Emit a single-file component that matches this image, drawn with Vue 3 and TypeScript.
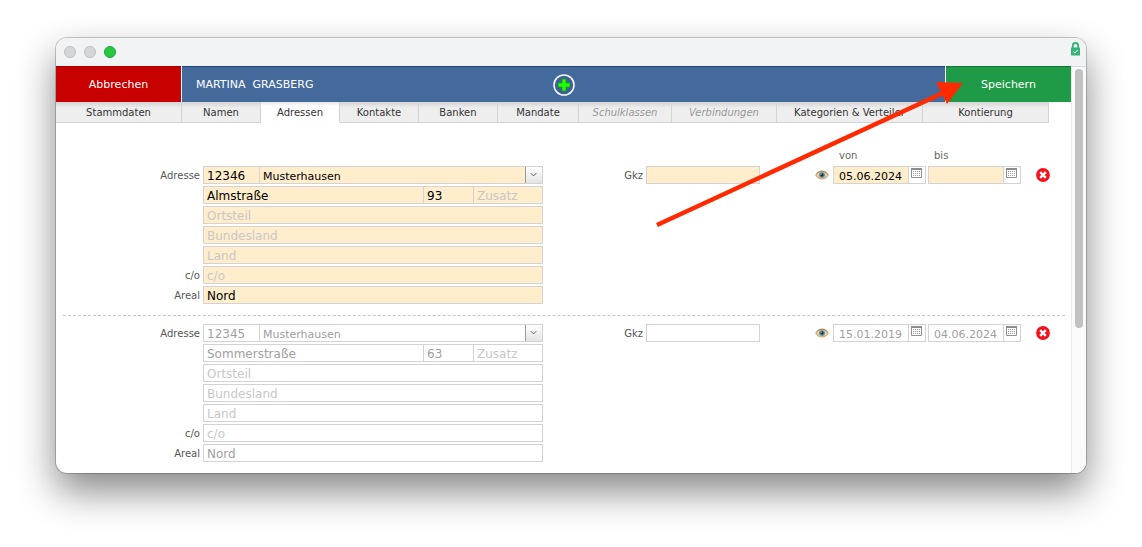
<script setup lang="ts">
import { ref } from 'vue'

interface Tab {
  label: string
  width: number
  muted?: boolean
}

interface Address {
  id: string
  current: boolean
  zip: string
  town: string
  street: string
  number: string
  addition: string
  district: string
  state: string
  country: string
  careOf: string
  area: string
  gkz: string
  from: string
  until: string
}

const tabs: Tab[] = [
  { label: 'Stammdaten', width: 126 },
  { label: 'Namen', width: 79 },
  { label: 'Adressen', width: 79 },
  { label: 'Kontakte', width: 79 },
  { label: 'Banken', width: 79 },
  { label: 'Mandate', width: 81 },
  { label: 'Schulklassen', width: 93, muted: true },
  { label: 'Verbindungen', width: 105, muted: true },
  { label: 'Kategorien & Verteiler', width: 146 },
  { label: 'Kontierung', width: 126 },
]
const activeTab = ref('Adressen')

const addresses = ref<Address[]>([
  {
    id: 'a1', current: true, zip: '12346', town: 'Musterhausen', street: 'Almstraße', number: '93',
    addition: '', district: '', state: '', country: '', careOf: '', area: 'Nord', gkz: '',
    from: '05.06.2024', until: '',
  },
  {
    id: 'a2', current: false, zip: '12345', town: 'Musterhausen', street: 'Sommerstraße', number: '63',
    addition: '', district: '', state: '', country: '', careOf: '', area: 'Nord', gkz: '',
    from: '15.01.2019', until: '04.06.2024',
  },
])

const dateFields = [
  { key: 'from', label: 'von' },
  { key: 'until', label: 'bis' },
] as const
</script>

<template>
  <div class="desktop">
    <main class="window">
      <div class="titlebar">
        <span class="light"></span>
        <span class="light"></span>
        <span class="light green"></span>
        <svg class="lock" width="9" height="14" viewBox="0 0 9 14" aria-hidden="true">
          <path d="M1.800 7V3.700a2.700 2.700 0 0 1 5.400 0V7" fill="none" stroke="#35b278" stroke-width="1.800" />
          <rect y="5.500" width="9" height="8" rx="0.500" fill="#35b278" />
          <path d="M2.300 9.500l1.600 1.600 2.900-3.200" fill="none" stroke="#fff" stroke-width="1" />
        </svg>
      </div>

      <div class="viewport">
        <div class="page">
          <header class="toolbar">
            <button type="button" class="action cancel">Abbrechen</button>
            <div class="person">
              <h1>MARTINA&nbsp; GRASBERG</h1>
              <button type="button" class="add" aria-label="Hinzufügen">
                <svg width="22" height="22" viewBox="0 0 22 22">
                  <circle cx="11" cy="11" r="10" fill="#3f6095" stroke="#f2f5fa" stroke-width="1.600" />
                  <path d="M9 5h4v4h4v4h-4v4H9v-4H5V9h4z" fill="#1fff00" stroke="#169c1d" stroke-width="0.700" />
                </svg>
              </button>
            </div>
            <button type="button" class="action save">Speichern</button>
          </header>

          <nav class="tabs">
            <button
              v-for="tab in tabs"
              :key="tab.label"
              type="button"
              class="tab"
              :class="{ active: tab.label === activeTab, muted: tab.muted }"
              :style="{ flexBasis: tab.width + 'px' }"
              @click="activeTab = tab.label"
            >{{ tab.label }}</button>
          </nav>

          <div class="columns">
            <span v-for="field in dateFields" :key="field.key">{{ field.label }}</span>
          </div>

          <section
            v-for="address in addresses"
            :key="address.id"
            class="address"
            :class="{ current: address.current }"
          >
            <div class="lines">
              <label :for="address.id + '-zip'">Adresse</label>
              <div class="line place">
                <input :id="address.id + '-zip'" v-model="address.zip" type="text" />
                <div class="combo">
                  <select v-model="address.town" aria-label="Ort">
                    <option>Musterhausen</option>
                  </select>
                  <svg width="17" height="16" viewBox="0 0 17 16" aria-hidden="true">
                    <path d="M5 6l3 3 3-3" fill="none" stroke="#555" stroke-width="1" />
                  </svg>
                </div>
              </div>
              <div class="line street">
                <input v-model="address.street" type="text" aria-label="Straße" />
                <input v-model="address.number" type="text" aria-label="Hausnummer" />
                <input v-model="address.addition" type="text" placeholder="Zusatz" aria-label="Zusatz" />
              </div>
              <div class="line">
                <input v-model="address.district" type="text" placeholder="Ortsteil" aria-label="Ortsteil" />
              </div>
              <div class="line">
                <input v-model="address.state" type="text" placeholder="Bundesland" aria-label="Bundesland" />
              </div>
              <div class="line">
                <input v-model="address.country" type="text" placeholder="Land" aria-label="Land" />
              </div>
              <label :for="address.id + '-co'">c/o</label>
              <div class="line">
                <input :id="address.id + '-co'" v-model="address.careOf" type="text" placeholder="c/o" />
              </div>
              <label :for="address.id + '-area'">Areal</label>
              <div class="line">
                <input :id="address.id + '-area'" v-model="address.area" type="text" />
              </div>
            </div>

            <div class="gkz">
              <label :for="address.id + '-gkz'">Gkz</label>
              <div class="line">
                <input :id="address.id + '-gkz'" v-model="address.gkz" type="text" />
              </div>
            </div>

            <div class="validity">
              <button type="button" class="icon eye" aria-label="Anzeigen">
                <svg width="14" height="10" viewBox="0 0 14 10">
                  <path d="M0.800 5C2.500 2.300 4.500 1 7 1s4.500 1.300 6.200 4C11.500 7.700 9.500 9 7 9S2.500 7.700 0.800 5z" fill="#ddd5c4" stroke="#d9a25a" stroke-width="1.200" />
                  <path d="M1.500 3.800C3.300 1.900 5 1.400 7 1.400s3.700 0.500 5.500 2.400" fill="none" stroke="#9c8250" stroke-width="0.800" />
                  <circle cx="7" cy="4.900" r="3" fill="#6c93a3" />
                  <circle cx="7" cy="4.900" r="1.600" fill="#1d2a33" />
                  <circle cx="6.200" cy="4" r="0.600" fill="#fff" />
                </svg>
              </button>
              <div v-for="field in dateFields" :key="field.key" class="line date">
                <input v-model="address[field.key]" type="text" :aria-label="field.label" />
                <button type="button" class="icon" aria-label="Kalender">
                  <svg width="11" height="11" viewBox="0 0 11 11">
                    <path d="M0.500 0.500h10v9h-10z" fill="#fff" stroke="#909090" />
                    <path d="M0 1h11" stroke="#8c8c8c" stroke-width="2" />
                    <path d="M2 3.500h7M2 5.500h7M2 7.500h7" stroke="#999" stroke-dasharray="1 1" />
                  </svg>
                </button>
              </div>
              <button type="button" class="icon remove" aria-label="Löschen">
                <svg width="14" height="14" viewBox="0 0 14 14">
                  <circle cx="7" cy="7" r="6.900" fill="#f5101a" />
                  <path d="M4.200 4.200l5.600 5.600M9.800 4.200L4.200 9.800" stroke="#fff" stroke-width="2.400" />
                </svg>
              </button>
            </div>
          </section>
        </div>
        <div class="scrollbar"><div class="thumb"></div></div>
      </div>

      <svg class="arrow" width="312" height="150" viewBox="0 0 312 150" aria-hidden="true">
        <path d="M2 147L288 15" stroke="#ff2a00" stroke-width="4.500" />
        <path d="M308 5L281 4L292 26z" fill="#ff2a00" />
      </svg>
    </main>
  </div>
</template>

<style>
body {
  margin: 0;
  background: #fff;
}
</style>

<style scoped>
* {
  box-sizing: border-box;
}

.desktop {
  padding: 38px 56px 74px;
  font-family: "DejaVu Sans", Verdana, sans-serif;
  font-size: 10px;
  color: #333;
}

button,
input,
select {
  margin: 0;
  padding: 0;
  border: 0;
  border-radius: 0;
  background: none;
  font: inherit;
  color: inherit;
}

.window {
  position: relative;
  border-radius: 11px;
  background: #fff;
  box-shadow: 0 0 0 1px rgba(0, 0, 0, 0.2), 0 18px 38px rgba(0, 0, 0, 0.48);
}

.titlebar {
  display: flex;
  align-items: center;
  gap: 8px;
  height: 28px;
  padding: 0 6px 0 8px;
  border-radius: 11px 11px 0 0;
  background: #f1f3f5;
}

.light {
  width: 12px;
  height: 12px;
  border: 1px solid #bfc0c2;
  border-radius: 50%;
  background: #d5d6d8;
}

.light.green {
  border-color: #1ca835;
  background: #28c840;
}

.lock {
  align-self: flex-start;
  margin: 4px 0 0 auto;
}

.viewport {
  display: flex;
}

.page {
  flex: 1;
  min-width: 0;
  padding-bottom: 11px;
}

.toolbar {
  display: grid;
  grid-template-columns: 125px 1fr 125px;
  gap: 1px;
  height: 36px;
  font-size: 11px;
  color: #fff;
}

.action,
.person {
  border-top: 1px solid #1f4375;
}

.cancel {
  border-top-color: #9c0000;
  background: #c80000;
}

.save {
  border-top-color: #0d7530;
  background: #1f9b47;
}

.person {
  display: grid;
  grid-template-columns: 1fr auto 1fr;
  align-items: center;
  padding: 0 14px;
  background: #44699b;
}

h1 {
  margin: 0;
  font-size: 11px;
  font-weight: 400;
}

.add svg,
.icon svg {
  display: block;
}

.tabs {
  display: flex;
  height: 21px;
}

.tab {
  flex: 0 1 auto;
  min-width: 0;
  overflow: hidden;
  border: solid #d3d3d3;
  border-width: 0 1px 1px 0;
  background: linear-gradient(#d4d4d4, #eee 6px);
  white-space: nowrap;
}

.tab.active {
  border-bottom-color: #fff;
  background: linear-gradient(#e4e4e4, #fff 4px);
}

.tab.muted {
  font-style: italic;
  color: #999;
}

.columns {
  display: flex;
  justify-content: flex-end;
  gap: 2px;
  padding: 27px 50px 4px 0;
  line-height: 12px;
  color: #666;
}

.columns span {
  width: 93px;
  padding-left: 6px;
}

.address {
  display: grid;
  grid-template-columns: minmax(0, 487px) 217px 1fr;
  color: #a0a0a0;
}

.address + .address {
  position: relative;
  margin-top: 11px;
  padding-top: 9px;
}

.address + .address::before {
  content: "";
  position: absolute;
  top: 0;
  left: 7px;
  right: 6px;
  border-top: 1px dashed #c4c4c4;
}

.address.current {
  color: #000;
}

.lines {
  display: grid;
  grid-template-columns: 144px minmax(0, 1fr);
  grid-auto-rows: 18px;
  gap: 2px 3px;
}

label {
  line-height: 20px;
  text-align: right;
  color: #555;
}

.line {
  grid-column: 2;
  display: grid;
  height: 18px;
  border: 1px solid #d3d3d3;
  font-size: 12px;
}

.line > * + * {
  border-left: 1px solid #d3d3d3;
}

.place {
  grid-template-columns: 55px minmax(0, 1fr);
}

.street {
  grid-template-columns: minmax(0, 1fr) 50px 69px;
}

.line input {
  width: 100%;
  min-width: 0;
  height: 16px;
  padding: 1px 3px 0;
  outline: 0;
}

.current .line {
  background: #ffedcb;
}

::placeholder {
  color: #c8c8c8;
  opacity: 1;
}

.combo {
  position: relative;
  font-size: 11px;
}

.combo select {
  display: block;
  width: 100%;
  height: 16px;
  padding: 2px 20px 0 3px;
  appearance: none;
}

.combo svg {
  position: absolute;
  top: 0;
  right: 0;
  border-left: 1px solid #999;
  background: linear-gradient(#fff, #e4e4e4);
  pointer-events: none;
}

.gkz {
  display: grid;
  grid-template-columns: 100px 114px;
  align-content: start;
  gap: 3px;
}

.validity {
  display: flex;
  justify-content: flex-end;
  align-items: center;
  gap: 2px;
  height: 18px;
  padding-right: 21px;
}

.date {
  grid-template-columns: 74px 17px;
  width: 93px;
  font-size: 11px;
}

.date input {
  padding: 2px 0 0 5px;
}

.date .icon {
  padding: 1px 2px 4px;
  background: #fff;
}

.eye {
  margin-right: 2px;
}

.remove {
  margin-left: 13px;
}

.scrollbar {
  width: 15px;
  padding: 2px 3px 0;
  border: solid #d9dadc;
  border-width: 1px 0 0;
  border-radius: 0 0 11px 0;
  background: #fafafa;
  box-shadow: inset 1px 0 #e8e8e8;
}

.thumb {
  width: 8px;
  height: 64%;
  margin-left: 1px;
  border-radius: 4px;
  background: #c1c1c1;
}

.arrow {
  position: absolute;
  top: 40px;
  right: 119px;
  pointer-events: none;
}
</style>
